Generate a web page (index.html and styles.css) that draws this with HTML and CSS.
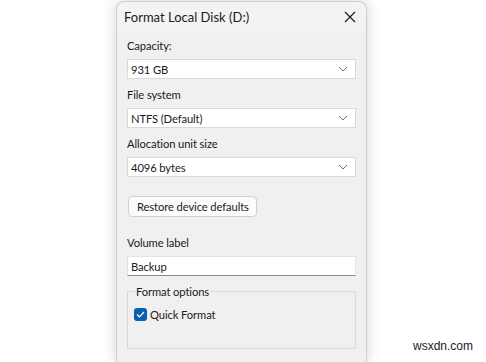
FILE: index.html
```html
<!DOCTYPE html>
<html lang="en">
<head>
    <meta charset="UTF-8">
    <title>Format Local Disk (D:)</title>
    <link rel="stylesheet" href="styles.css">
</head>
<body>
    <div class="dialog">
        <div class="titlebar">
            <span class="title">Format Local Disk (D:)</span>
            <svg class="close" width="12" height="12" viewBox="0 0 12 12">
                <path d="M1 1 L11 11 M11 1 L1 11" stroke="#1a1a1a" stroke-width="1.2" fill="none"/>
            </svg>
        </div>
        <div class="content">
            <div class="field">
                <label>Capacity:</label>
                <div class="select"><span>931 GB</span><svg class="chev" width="10" height="6" viewBox="0 0 10 6"><path d="M1 1 L5 5 L9 1" stroke="#707070" fill="none"/></svg></div>
            </div>
            <div class="field">
                <label>File system</label>
                <div class="select"><span>NTFS (Default)</span><svg class="chev" width="10" height="6" viewBox="0 0 10 6"><path d="M1 1 L5 5 L9 1" stroke="#707070" fill="none"/></svg></div>
            </div>
            <div class="field">
                <label>Allocation unit size</label>
                <div class="select"><span>4096 bytes</span><svg class="chev" width="10" height="6" viewBox="0 0 10 6"><path d="M1 1 L5 5 L9 1" stroke="#707070" fill="none"/></svg></div>
            </div>
            <button class="restore-btn">Restore device defaults</button>
            <div class="field volume">
                <label>Volume label</label>
                <div class="textbox">Backup</div>
            </div>
            <fieldset class="options">
                <legend>Format options</legend>
                <div class="check-row">
                    <span class="checkbox"><svg width="9" height="7" viewBox="0 0 9 7"><path d="M1 3.5 L3.5 6 L8 1" stroke="#fff" stroke-width="1.2" fill="none"/></svg></span>
                    Quick Format
                </div>
            </fieldset>
        </div>
    </div>
    <div class="watermark">wsxdn.com</div>
</body>
</html>
```

FILE: styles.css
```css
body {
    margin: 0;
    background: #ffffff;
    font-family: 'Lato', sans-serif;
    font-size: 11.2px;
    letter-spacing: -0.1px;
    color: #1a1a1a;
    height: 362px;
    overflow: hidden;
}

.dialog {
    margin: 1px 0 0 116px;
    width: 251px;
    height: 361px;
    background: #f0f0f0;
    border: 1px solid #cfcfcf;
    border-bottom: none;
    border-radius: 8px 8px 0 0;
    box-sizing: border-box;
    box-shadow: 0 0 14px rgba(0, 0, 0, 0.18);
}

.titlebar {
    height: 30px;
    display: flex;
    align-items: center;
    justify-content: space-between;
    padding: 0 10px 0 7px;
    background: #f3f3f3;
    border-radius: 8px 8px 0 0;
}

.title {
    font-size: 13px;
    letter-spacing: 0;
}

.content {
    padding: 6px 10px 0 10px;
}

.field label {
    display: block;
    line-height: 16px;
    margin-bottom: 5px;
}

.field {
    margin-bottom: 8px;
}

.select {
    height: 20px;
    background: #ffffff;
    border: 1px solid #d9d9d9;
    box-sizing: border-box;
    display: flex;
    align-items: center;
    justify-content: space-between;
    padding: 0 7px 0 3px;
}

.restore-btn {
    display: block;
    margin: 19px 0 0 1px;
    height: 21px;
    padding: 0 7px 0 8px;
    font-family: inherit;
    font-size: 11.2px;
    letter-spacing: -0.1px;
    color: #1a1a1a;
    background: #fbfbfb;
    border: 1px solid #d0d0d0;
    border-radius: 4px;
}

.volume {
    margin-top: 18px;
}

.textbox {
    height: 20px;
    line-height: 19px;
    background: #ffffff;
    border: 1px solid #e2e2e2;
    border-bottom: 1px solid #8a8a8a;
    box-sizing: border-box;
    padding: 0 3px;
}

.options {
    margin: 9px 0 0 0;
    padding: 0 6px;
    height: 64px;
    border: 1px solid #dadada;
    box-sizing: border-box;
}

.options legend {
    padding: 0 1px;
    margin-left: 1px;
}

.check-row {
    display: flex;
    align-items: center;
    gap: 3px;
    margin-top: 10px;
}

.checkbox {
    width: 13px;
    height: 13px;
    border-radius: 3px;
    background: #0a5fb4;
    display: flex;
    align-items: center;
    justify-content: center;
}

.watermark {
    position: absolute;
    left: 413px;
    top: 339px;
    font-family: 'Liberation Sans', sans-serif;
    font-size: 12px;
    letter-spacing: 0;
    color: #1a1a1a;
}
```
